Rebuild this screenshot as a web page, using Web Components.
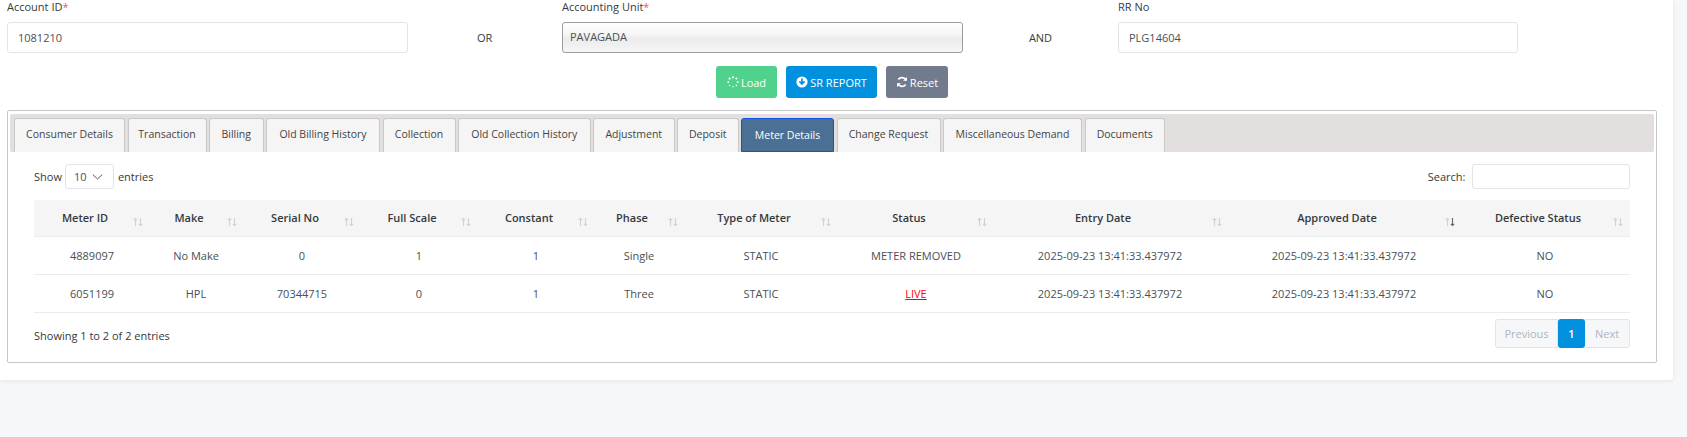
<!DOCTYPE html>
<html>
<head>
<meta charset="utf-8">
<title>Meter Details</title>
<style>
  html, body { margin: 0; height: 100%; background: #f6f7f9; }
  body { font: 11px "Open Sans", "Noto Sans", sans-serif; color: #495057; overflow: hidden; }
</style>
</head>
<body>
<page-card>
  <search-bar></search-bar>
  <action-bar></action-bar>
  <tab-panel>
    <meter-table></meter-table>
  </tab-panel>
</page-card>

<script>
class PageCard extends HTMLElement {
  constructor() {
    super();
    this.attachShadow({ mode: 'open' });
    this.shadowRoot.innerHTML = `
      <style>
        :host {
          display: block;
          box-sizing: border-box;
          width: 1673px;
          height: 380px;
          padding: 0 16px 0 7px;
          background: #fff;
          border-radius: 0 0 3px 0;
          box-shadow: 0 1px 4px rgba(0, 0, 0, .08);
        }
      </style>
      <slot></slot>
    `;
  }
}

class FieldBox extends HTMLElement {
  constructor() {
    super();
    this.attachShadow({ mode: 'open' });
    const label = this.getAttribute('label');
    const star = this.hasAttribute('required') ? '<span class="star">*</span>' : '';
    this.shadowRoot.innerHTML = `
      <style>
        :host { display: block; }
        label { display: block; height: 22px; line-height: 14px; color: #343a40; }
        .star { color: #f1556c; }
        .box {
          box-sizing: border-box;
          height: 31px;
          padding: 0 10px;
          line-height: 29px;
          border: 1px solid #e2e5e8;
          border-radius: 3px;
          background: #fff;
          color: #495057;
        }
        :host([select]) .box {
          padding: 0 7px;
          border-color: #9c9c9c;
          background: linear-gradient(#fff 0, #f5f5f5 40%, #ebebeb 55%, #f6f6f6 100%);
          line-height: 27px;
        }
      </style>
      <label>${label}${star}</label>
      <div class="box"><slot></slot></div>
    `;
  }
}

class SearchBar extends HTMLElement {
  constructor() {
    super();
    this.attachShadow({ mode: 'open' });
    this.shadowRoot.innerHTML = `
      <style>
        :host {
          display: grid;
          grid-template-columns: 400.5px 154.5px 401px 155px 400px;
          height: 66px;
          color: #343a40;
        }
        .word { padding-top: 30px; text-align: center; line-height: 16px; }
      </style>
      <field-box label="Account ID" required>1081210</field-box>
      <div class="word">OR</div>
      <field-box label="Accounting Unit" required select>PAVAGADA</field-box>
      <div class="word">AND</div>
      <field-box label="RR No">PLG14604</field-box>
    `;
  }
}

class ActionButton extends HTMLElement {
  constructor() {
    super();
    this.attachShadow({ mode: 'open' });
    this.shadowRoot.innerHTML = `
      <style>
        :host {
          display: inline-flex;
          align-items: center;
          justify-content: center;
          gap: 2px;
          box-sizing: border-box;
          height: 32px;
          border-radius: 3px;
          color: #fff;
          background: var(--bg);
        }
        ::slotted(svg) { display: block; }
      </style>
      <slot name="icon"></slot><slot></slot>
    `;
  }
}

class ActionBar extends HTMLElement {
  constructor() {
    super();
    this.attachShadow({ mode: 'open' });
    this.shadowRoot.innerHTML = `
      <style>
        :host { display: flex; justify-content: center; gap: 9px; height: 44px; }
      </style>
      <action-button style="--bg:#51d28c;width:61px">
        <svg slot="icon" width="12" height="12" viewBox="0 0 12 12" fill="#fff">
          <circle cx="6" cy="1.3" r="1.1"/><circle cx="9.4" cy="2.6" r="1"/><circle cx="10.7" cy="6" r=".9"/>
          <circle cx="9.4" cy="9.4" r=".8"/><circle cx="6" cy="10.8" r=".7"/><circle cx="2.6" cy="9.4" r=".7"/>
          <circle cx="1.3" cy="6" r=".9"/><circle cx="2.6" cy="2.6" r="1.1"/>
        </svg>
        Load
      </action-button>
      <action-button style="--bg:#0090dd;width:91px">
        <svg slot="icon" width="12" height="12" viewBox="0 0 12 12">
          <circle cx="6" cy="6" r="5.6" fill="#fff"/>
          <path d="M6 2.6v5M3.4 5.4 6 8l2.6-2.6" fill="none" stroke="#0090dd" stroke-width="1.7"/>
        </svg>
        SR REPORT
      </action-button>
      <action-button style="--bg:#727a8e;width:62px">
        <svg slot="icon" width="12" height="12" viewBox="0 0 12 12" fill="none" stroke="#fff" stroke-width="1.8">
          <path d="M10.2 4.4A4.5 4.5 0 0 0 2.3 3.6"/><path d="M1.8 7.6a4.5 4.5 0 0 0 7.9.8"/>
          <path d="M11 .9v3.9H7.1z" fill="#fff" stroke="none"/><path d="M1 11.1V7.2h3.9z" fill="#fff" stroke="none"/>
        </svg>
        Reset
      </action-button>
    `;
  }
}

class TabPanel extends HTMLElement {
  constructor() {
    super();
    this.attachShadow({ mode: 'open' });
    const tabs = [
      ['Consumer Details', 111], ['Transaction', 79], ['Billing', 54.5], ['Old Billing History', 114],
      ['Collection', 73], ['Old Collection History', 132.5], ['Adjustment', 81.5], ['Deposit', 61.5],
      ['Meter Details', 93], ['Change Request', 104], ['Miscellaneous Demand', 139], ['Documents', 80.5]
    ];
    const items = tabs.map(([name, width]) => {
      const active = name === 'Meter Details' ? ' active' : '';
      return `<div class="tab${active}" style="width:${width}px">${name}</div>`;
    }).join('');
    this.shadowRoot.innerHTML = `
      <style>
        :host {
          display: block;
          box-sizing: border-box;
          height: 253px;
          padding: 3px 2px;
          border: 1px solid #c6c6c6;
          border-radius: 2px;
        }
        .tabs {
          display: flex;
          gap: 2.5px;
          box-sizing: border-box;
          height: 38px;
          padding: 4px 0 0 4px;
          background: #e2dfde;
          border-radius: 2px;
        }
        .tab {
          box-sizing: border-box;
          height: 34px;
          border: 1px solid #c9c9c9;
          border-bottom: 0;
          border-radius: 3px 3px 0 0;
          background: #f5f5f5;
          color: #444;
          font-size: 10.5px;
          text-align: center;
          line-height: 30px;
          white-space: nowrap;
        }
        .tab.active {
          background: #4a7095;
          border: 1px solid #1450e0;
          color: #fff;
          line-height: 32px;
        }
        .body { padding: 12px 24px 0 24px; }
      </style>
      <div class="tabs">${items}</div>
      <div class="body"><slot></slot></div>
    `;
  }
}

class MeterTable extends HTMLElement {
  constructor() {
    super();
    this.attachShadow({ mode: 'open' });
    const widths = [116, 92, 120, 114, 120, 86, 158, 152, 236, 232, 170];
    const arrowRight = [7, 5, 8, 5, 8, 4, 9, 5, 6, 5, 7];
    const head = ['Meter ID', 'Make', 'Serial No', 'Full Scale', 'Constant', 'Phase', 'Type of Meter', 'Status', 'Entry Date', 'Approved Date', 'Defective Status'];
    const rows = [
      ['4889097', 'No Make', '0', '1', '1', 'Single', 'STATIC', 'METER REMOVED', '2025-09-23 13:41:33.437972', '2025-09-23 13:41:33.437972', 'NO'],
      ['6051199', 'HPL', '70344715', '0', '1', 'Three', 'STATIC', '<a>LIVE</a>', '2025-09-23 13:41:33.437972', '2025-09-23 13:41:33.437972', 'NO']
    ];
    const arrows = (sorted, right) => `
      <svg class="sort" style="right:${right}px" width="10" height="10" viewBox="0 0 10 10" fill="none" stroke-width="1.1">
        <path d="M2.5 9V1.5M.8 3.2 2.5 1.5l1.7 1.7" stroke="#d0d3d6"/>
        <path d="M7.5 1v7.5M5.8 6.8 7.5 8.5l1.7-1.7" stroke="${sorted ? '#666' : '#d0d3d6'}"/>
      </svg>`;
    const headCells = head.map((name, i) => `<th>${name}${arrows(name === 'Approved Date', arrowRight[i])}</th>`).join('');
    const bodyRows = rows.map((row) => `<tr>${row.map((cell) => `<td>${cell}</td>`).join('')}</tr>`).join('');
    this.shadowRoot.innerHTML = `
      <style>
        :host { display: block; }
        .top, .bottom { display: flex; justify-content: space-between; align-items: center; }
        .top { height: 25px; margin-bottom: 11px; color: #343a40; }
        .show, .search { display: flex; align-items: center; gap: 3px; }
        .search { gap: 6px; }
        .select {
          display: flex;
          align-items: center;
          justify-content: space-between;
          box-sizing: border-box;
          width: 49px;
          height: 25px;
          padding: 0 10px 0 8px;
          margin: 0 1px 0 0;
          border: 1px solid #e2e5e8;
          border-radius: 3px;
          color: #495057;
        }
        .input {
          box-sizing: border-box;
          width: 158.5px;
          height: 25px;
          border: 1px solid #e2e5e8;
          border-radius: 3px;
        }
        table { width: 1596px; border-collapse: collapse; table-layout: fixed; }
        th {
          position: relative;
          box-sizing: border-box;
          height: 36px;
          padding: 0 22px 0 8px;
          background: #f5f5f5;
          border-bottom: 1px solid #e9ecef;
          color: #343a40;
          font-weight: 600;
          text-align: center;
          white-space: nowrap;
        }
        td {
          height: 37px;
          padding: 0;
          border-bottom: 1px solid #e9ecef;
          color: #495057;
          text-align: center;
          white-space: nowrap;
        }
        .sort { position: absolute; top: 17px; }
        a { color: #f00; text-decoration: underline; }
        .bottom { height: 29px; color: #343a40; margin-top: 6px; }
        .info { padding-top: 5px; }
        .pager { display: flex; height: 29px; line-height: 27px; }
        .pager div {
          box-sizing: border-box;
          padding: 0;
          text-align: center;
          border: 1px solid #e2e5e8;
          color: #adb5bd;
          background: #f6f7f9;
        }
        .pager .prev { width: 63px; border-radius: 3px 0 0 3px; }
        .pager .next { width: 45px; border-radius: 0 3px 3px 0; border-left: 0; }
        .pager .current { width: 27px; border: 0; border-radius: 3px; line-height: 29px; background: #0090dd; color: #fff; font-weight: 600; }
      </style>
      <div class="top">
        <div class="show">Show
          <div class="select">10
            <svg width="11" height="6" viewBox="0 0 11 6" fill="none" stroke="#555" stroke-width="1"><path d="M.8.6 5.5 5l4.7-4.4"/></svg>
          </div>
          entries</div>
        <div class="search">Search: <div class="input"></div></div>
      </div>
      <table>
        <colgroup>${widths.map((w) => `<col style="width:${w}px">`).join('')}</colgroup>
        <thead><tr>${headCells}</tr></thead>
        <tbody>${bodyRows}</tbody>
      </table>
      <div class="bottom">
        <div class="info">Showing 1 to 2 of 2 entries</div>
        <div class="pager">
          <div class="prev">Previous</div><div class="current">1</div><div class="next">Next</div>
        </div>
      </div>
    `;
  }
}

customElements.define('page-card', PageCard);
customElements.define('field-box', FieldBox);
customElements.define('search-bar', SearchBar);
customElements.define('action-button', ActionButton);
customElements.define('action-bar', ActionBar);
customElements.define('tab-panel', TabPanel);
customElements.define('meter-table', MeterTable);
</script>
</body>
</html>
